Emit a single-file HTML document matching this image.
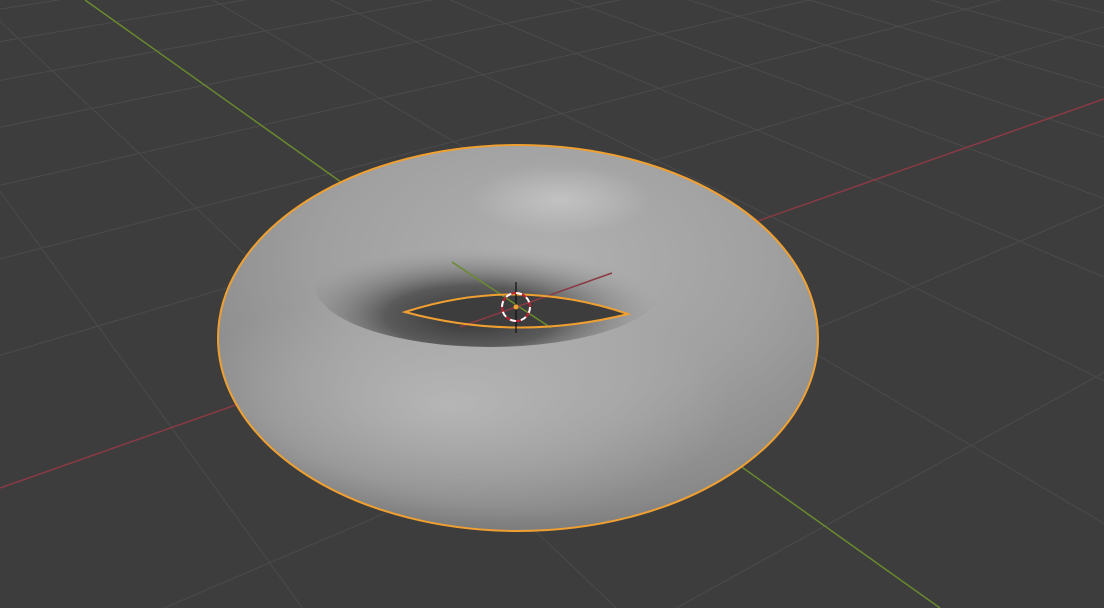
<!DOCTYPE html>
<html><head><meta charset="utf-8"><style>
html,body{margin:0;padding:0;background:#3d3d3d;overflow:hidden;width:1104px;height:608px}
svg{display:block;overflow:hidden}
</style></head><body>
<svg id="s" width="1104" height="608" viewBox="0 0 1104 608" xmlns="http://www.w3.org/2000/svg">
<defs>
<clipPath id="tc"><ellipse cx="518" cy="338" rx="300" ry="193"/></clipPath>
<radialGradient id="body" cx="0.55" cy="0.3" r="0.75">
<stop offset="0" stop-color="#b0b0b0"/>
<stop offset="0.5" stop-color="#a0a0a0"/>
<stop offset="0.85" stop-color="#8a8a8a"/>
<stop offset="1" stop-color="#727272"/>
</radialGradient>
<radialGradient id="front" cx="0.5" cy="0.5" r="0.5">
<stop offset="0" stop-color="#bababa" stop-opacity="0.85"/>
<stop offset="0.6" stop-color="#b4b4b4" stop-opacity="0.4"/>
<stop offset="1" stop-color="#b0b0b0" stop-opacity="0"/>
</radialGradient>
<radialGradient id="cav" cx="0.45" cy="0.75" r="0.55">
<stop offset="0" stop-color="#333"/>
<stop offset="0.45" stop-color="#5a5a5a"/>
<stop offset="1" stop-color="#9a9a9a" stop-opacity="0"/>
</radialGradient>
<radialGradient id="hl" cx="0.5" cy="0.5" r="0.5">
<stop offset="0" stop-color="#c8c8c8" stop-opacity="0.8"/>
<stop offset="1" stop-color="#c8c8c8" stop-opacity="0"/>
</radialGradient>
</defs>
<rect width="1104" height="608" fill="#3d3d3d"/>
<g id="grid" stroke="#4b4b4b" stroke-width="1"></g>
<line x1="0" y1="488" x2="1104" y2="99" stroke="#8a3a45" stroke-width="1.5"/>
<line x1="85" y1="0" x2="940" y2="608" stroke="#6a8a2e" stroke-width="1.5"/>
<ellipse cx="518" cy="338" rx="300" ry="193" fill="url(#body)"/>
<g clip-path="url(#tc)">
<ellipse cx="450" cy="405" rx="280" ry="120" fill="url(#front)"/>
<ellipse cx="560" cy="200" rx="90" ry="35" fill="url(#hl)"/>
<ellipse cx="490" cy="285" rx="175" ry="62" fill="url(#cav)"/>
</g>
<path d="M405,312 Q516,276 628,314 Q516,342 405,312 Z" fill="#3d3d3d"/>
<line x1="452" y1="262" x2="551" y2="328" stroke="#6a8a2e" stroke-width="1.5"/>
<line x1="460" y1="327" x2="612" y2="273" stroke="#8a3a45" stroke-width="1.5"/>
<path d="M405,312 Q516,276 628,314 Q516,342 405,312 Z" fill="none" stroke="#f0a030" stroke-width="2"/>
<ellipse cx="518" cy="338" rx="300" ry="193" fill="none" stroke="#f0a030" stroke-width="2"/>
<line x1="516" y1="282" x2="516" y2="333" stroke="#111" stroke-width="1.2"/>
<circle cx="516" cy="307" r="14" fill="none" stroke="#c02030" stroke-width="2"/>
<circle cx="516" cy="307" r="14" fill="none" stroke="#fff" stroke-width="2" stroke-dasharray="6 5"/>
<circle cx="516" cy="307" r="2.5" fill="#f0a030"/>
</svg>
<script>
(function(){
var O=[516,306],VR=[2470,-380],VG=[-400,-360],a=0.075,b=0.125;
function P(x,y){var X=a*x*VR[0]+b*y*VG[0]+O[0],Y=a*x*VR[1]+b*y*VG[1]+O[1],W=a*x+b*y+1;return [X/W,Y/W];}
var g=document.getElementById('grid'),h='';
for(var k=-40;k<=60;k++){
 if(k===0)continue;
 var y0=(-0.9-a*k)/b;var p2=P(k,y0),q=P(k,400);
 h+='<line x1="'+p2[0]+'" y1="'+p2[1]+'" x2="'+q[0]+'" y2="'+q[1]+'"/>';
 var x0=(-0.9-b*k)/a;var r=P(x0,k),s=P(400,k);
 h+='<line x1="'+r[0]+'" y1="'+r[1]+'" x2="'+s[0]+'" y2="'+s[1]+'"/>';
}
g.innerHTML=h;
})();
</script>
</body></html>
